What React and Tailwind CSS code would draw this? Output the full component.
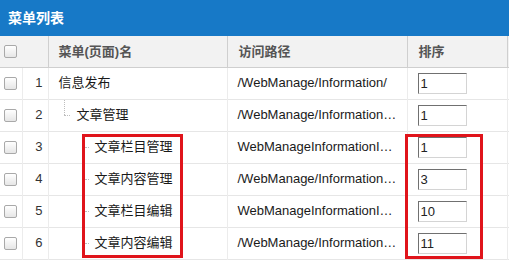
import React from "react";

const rows = [
  { id: 1, name: "信息发布", level: 0, path: "/WebManage/Information/", sort: "1" },
  { id: 2, name: "文章管理", level: 1, path: "/WebManage/Information…", sort: "1" },
  { id: 3, name: "文章栏目管理", level: 2, path: "WebManageInformationI…", sort: "1" },
  { id: 4, name: "文章内容管理", level: 2, path: "/WebManage/Information…", sort: "3" },
  { id: 5, name: "文章栏目编辑", level: 2, path: "WebManageInformationI…", sort: "10" },
  { id: 6, name: "文章内容编辑", level: 2, path: "/WebManage/Information…", sort: "11" },
];

function Checkbox() {
  return (
    <span className="block w-[13px] h-[13px] rounded-[2px] border border-[#a9a9a9] bg-gradient-to-b from-white to-[#e6e6e6]" />
  );
}

function NameCell({ row }) {
  if (row.level === 0) {
    return <span className="pl-[10px]">{row.name}</span>;
  }
  if (row.level === 1) {
    return (
      <div className="flex items-center h-full">
        <span className="relative w-[28px] h-full shrink-0">
          <span className="absolute left-[15px] top-0 h-[15px] border-l border-dotted border-[#bdbdbd]" />
          <span className="absolute left-[15px] top-[15px] w-[6px] border-t border-dotted border-[#bdbdbd]" />
        </span>
        <span>{row.name}</span>
      </div>
    );
  }
  return (
    <div className="flex items-center h-full">
      <span className="w-[46px] shrink-0 flex justify-end pr-[6px]">
        <span className="w-[4px] border-t border-dotted border-[#bdbdbd]" />
      </span>
      <span>{row.name}</span>
    </div>
  );
}

export default function App() {
  return (
    <div className="relative w-[509px] h-[262px] overflow-hidden bg-white font-['Liberation_Sans','Noto_Sans_CJK_SC',sans-serif] text-[13px] text-[#1a1a1a]">
      <div className="h-[36px] bg-[#1779c7] flex items-center pl-[8px] text-white font-bold text-[14px]">
        菜单列表
      </div>
      <table className="table-fixed border-collapse w-[509px]">
        <colgroup>
          <col className="w-[22px]" />
          <col className="w-[26px]" />
          <col className="w-[179px]" />
          <col className="w-[180px]" />
          <col className="w-[100px]" />
          <col className="w-[2px]" />
        </colgroup>
        <thead>
          <tr className="h-[31px] bg-[#f2f2f2] text-[#555] font-bold">
            <th colSpan={2} className="border-r border-b border-[#cfcfcf] text-left pl-[4px]">
              <Checkbox />
            </th>
            <th className="border-r border-b border-[#cfcfcf] text-left pl-[10px] font-bold">菜单(页面)名</th>
            <th className="border-r border-b border-[#cfcfcf] text-left pl-[11px] font-bold">访问路径</th>
            <th className="border-r border-b border-[#cfcfcf] text-left pl-[11px] font-bold">排序</th>
            <th className="border-b border-[#cfcfcf]" />
          </tr>
        </thead>
        <tbody>
          {rows.map((row) => (
            <tr key={row.id} className="h-[32px] border-b border-[#e6e6e6]">
              <td className="border-r border-[#ececec] pl-[4px]">
                <Checkbox />
              </td>
              <td className="border-r border-[#ececec] text-right pr-[5px] text-[#333]">{row.id}</td>
              <td className="border-r border-[#ececec] p-0 h-[32px]">
                <NameCell row={row} />
              </td>
              <td className="border-r border-[#ececec] pl-[10px] whitespace-nowrap overflow-hidden">{row.path}</td>
              <td className="border-r border-[#ececec] pl-[10px]">
                <input
                  readOnly
                  value={row.sort}
                  className="block w-[49px] h-[21px] px-[2px] text-[13px] text-[#222] border border-t-[#707070] border-l-[#707070] border-b-[#d4d4d4] border-r-[#d4d4d4] outline-none bg-white"
                />
              </td>
              <td />
            </tr>
          ))}
        </tbody>
      </table>
      <div className="absolute left-[82px] top-[134px] w-[101px] h-[124px] border-[3px] border-[#e0141b]" />
      <div className="absolute left-[405px] top-[134px] w-[78px] h-[125px] border-[3px] border-[#e0141b]" />
    </div>
  );
}
